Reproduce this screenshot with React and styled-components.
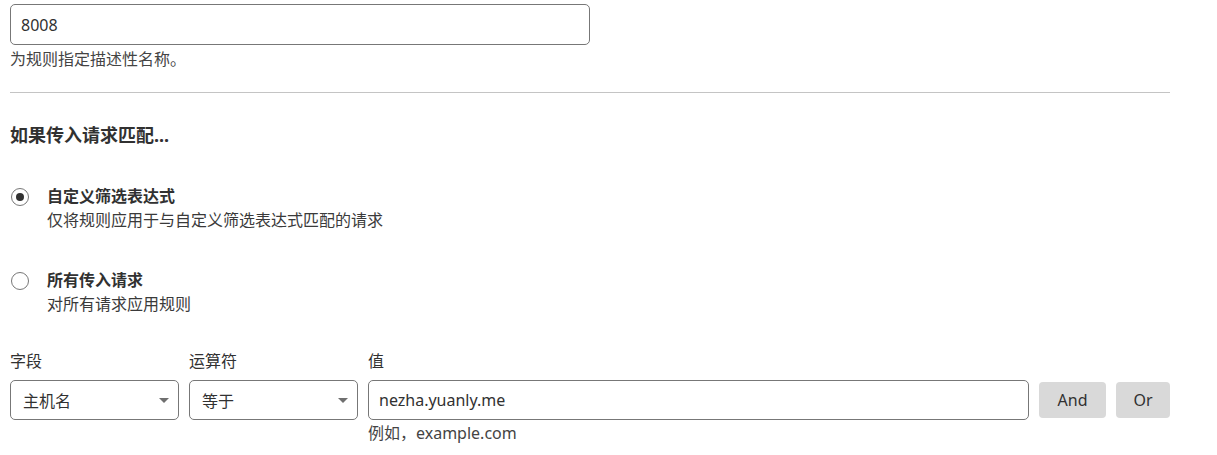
import styled, { createGlobalStyle } from "styled-components";

const GlobalStyle = createGlobalStyle`
  body {
    margin: 0;
    background: #fff;
    color: #313131;
    font-family: "Noto Sans", "Noto Sans CJK SC", sans-serif;
  }
`;

export default function App() {
  return (
    <Page>
      <GlobalStyle />
      <TextInput width="580px" defaultValue="8008" />
      <Help>为规则指定描述性名称。</Help>
      <Divider />
      <Heading>如果传入请求匹配...</Heading>

      <RadioList>
        <RadioRow>
          <Radio checked />
          <div>
            <RadioTitle>自定义筛选表达式</RadioTitle>
            <RadioDesc>仅将规则应用于与自定义筛选表达式匹配的请求</RadioDesc>
          </div>
        </RadioRow>
        <RadioRow>
          <Radio />
          <div>
            <RadioTitle>所有传入请求</RadioTitle>
            <RadioDesc>对所有请求应用规则</RadioDesc>
          </div>
        </RadioRow>
      </RadioList>

      <ExprGrid>
        <FieldLabel>字段</FieldLabel>
        <FieldLabel>运算符</FieldLabel>
        <FieldLabel>值</FieldLabel>
        <span />
        <span />

        <Select>
          主机名
          <Caret />
        </Select>
        <Select>
          等于
          <Caret />
        </Select>
        <TextInput height="40px" defaultValue="nezha.yuanly.me" />
        <GrayButton width="67px">And</GrayButton>
        <GrayButton width="54px">Or</GrayButton>

        <span />
        <span />
        <Hint>例如，example.com</Hint>
      </ExprGrid>
    </Page>
  );
}

const Caret = () => (
  <CaretSvg width="10" height="5" viewBox="0 0 10 5">
    <path d="M0 0 L10 0 L5 5 Z" fill="#6f6f6f" />
  </CaretSvg>
);

const Page = styled.div`
  padding: 4px 0 0 10px;
  width: 1160px;
`;

const TextInput = styled.input`
  box-sizing: border-box;
  width: ${(p) => p.width || "100%"};
  height: ${(p) => p.height || "41px"};
  border: 1px solid #777;
  border-radius: 5px;
  padding: 0 10px;
  font-family: "Noto Sans", "Noto Sans CJK SC", sans-serif;
  font-size: 16px;
  color: #313131;
  outline: none;
  display: block;
`;

const Help = styled.div`
  margin-top: 2px;
  font-size: 16px;
  line-height: 24px;
  color: #444;
`;

const Divider = styled.div`
  margin-top: 21px;
  height: 1px;
  background: #c4c4c4;
`;

const Heading = styled.div`
  margin-top: 29px;
  font-size: 18px;
  line-height: 26px;
  font-weight: 700;
  color: #313131;
`;

const RadioList = styled.div`
  margin-top: 36px;
  display: flex;
  flex-direction: column;
  gap: 36px;
`;

const RadioRow = styled.div`
  display: flex;
  align-items: flex-start;
  gap: 18px;
`;

const Radio = styled.span`
  box-sizing: border-box;
  flex: none;
  width: 18px;
  height: 18px;
  margin: 4px 0 0 1px;
  border: 1px solid #777;
  border-radius: 50%;
  display: flex;
  align-items: center;
  justify-content: center;

  &::after {
    content: "";
    width: 8px;
    height: 8px;
    border-radius: 50%;
    background: #313131;
    display: ${(p) => (p.checked ? "block" : "none")};
  }
`;

const RadioTitle = styled.div`
  font-size: 16px;
  line-height: 24px;
  font-weight: 700;
`;

const RadioDesc = styled.div`
  font-size: 16px;
  line-height: 24px;
  color: #3a3a3a;
`;

const ExprGrid = styled.div`
  margin-top: 33px;
  display: grid;
  grid-template-columns: 169px 169px 1fr 67px 54px;
  column-gap: 10px;
  align-items: center;
`;

const FieldLabel = styled.div`
  font-size: 16px;
  line-height: 24px;
  margin-bottom: 7px;
`;

const Select = styled.div`
  box-sizing: border-box;
  height: 40px;
  border: 1px solid #777;
  border-radius: 5px;
  padding: 0 9px 0 12px;
  display: flex;
  align-items: center;
  justify-content: space-between;
  font-size: 16px;
`;

const CaretSvg = styled.svg`
  display: block;
`;

const GrayButton = styled.button`
  box-sizing: border-box;
  width: ${(p) => p.width};
  height: 36px;
  border: none;
  border-radius: 4px;
  background: #d9d9d9;
  color: #313131;
  font-family: "Noto Sans", "Noto Sans CJK SC", sans-serif;
  font-size: 16px;
  padding: 0;
`;

const Hint = styled.div`
  margin-top: 1px;
  font-size: 16px;
  line-height: 24px;
  color: #444;
`;
